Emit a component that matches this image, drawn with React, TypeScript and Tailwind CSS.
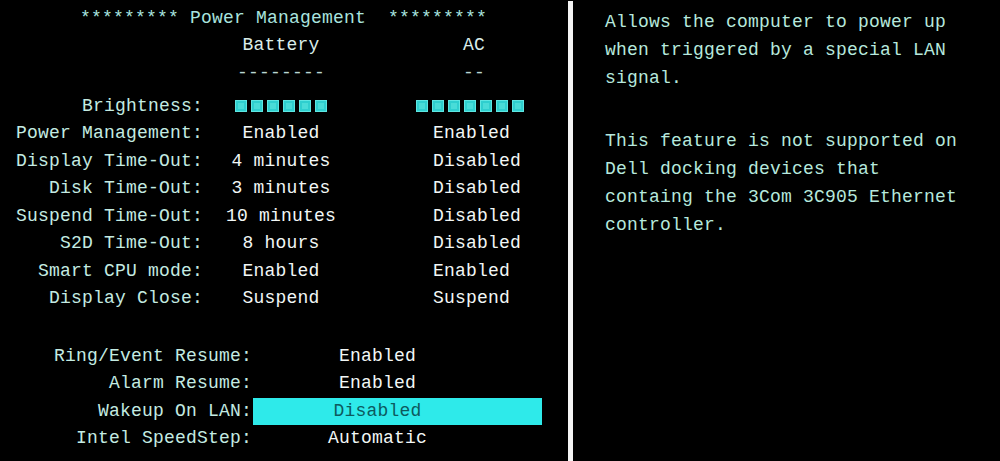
import React from 'react'

const upperRows = [
  { label: 'Power Management:', battery: 'Enabled', ac: 'Enabled' },
  { label: 'Display Time-Out:', battery: '4 minutes', ac: 'Disabled' },
  { label: 'Disk Time-Out:', battery: '3 minutes', ac: 'Disabled' },
  { label: 'Suspend Time-Out:', battery: '10 minutes', ac: 'Disabled' },
  { label: 'S2D Time-Out:', battery: '8 hours', ac: 'Disabled' },
  { label: 'Smart CPU mode:', battery: 'Enabled', ac: 'Enabled' },
  { label: 'Display Close:', battery: 'Suspend', ac: 'Suspend' },
]

const lowerRows = [
  { label: 'Ring/Event Resume:', value: 'Enabled' },
  { label: 'Alarm Resume:', value: 'Enabled' },
  { label: 'Wakeup On LAN:', value: 'Disabled', selected: true },
  { label: 'Intel SpeedStep:', value: 'Automatic' },
]

function Blocks({ count }: { count: number }) {
  return (
    <div className="flex gap-[4px]">
      {Array.from({ length: count }).map((_, i) => (
        <div
          key={i}
          className="w-[12px] h-[12px] bg-[#2fcfcf] border border-[#5ee6e2] flex items-center justify-center"
        >
          <div className="w-[6px] h-[6px] bg-[#49dcd8]" />
        </div>
      ))}
    </div>
  )
}

export default function App() {
  return (
    <div className="flex h-[461px] w-[1000px] overflow-hidden bg-black font-['Liberation_Mono',monospace] text-[18px] tracking-[0.2px]">
      {/* Settings panel */}
      <div className="w-[568px] shrink-0 pt-[4.5px] leading-[27.5px] whitespace-pre">
        <div className="pl-[80px] text-[#a9e3df]">********* Power Management  *********</div>

        <div className="grid grid-cols-[203px_156px_1fr]">
          <div />
          <div className="text-center text-[#dbeeea]">Battery</div>
          <div className="pl-[104px] text-[#dbeeea]">AC</div>

          <div />
          <div className="text-center text-[#b9d6d2]">--------</div>
          <div className="pl-[104px] text-[#b9d6d2]">--</div>
        </div>

        <div className="grid grid-cols-[203px_156px_1fr] mt-[5.5px]">
          <div className="text-right text-[#c4ebe2]">Brightness:</div>
          <div className="flex items-center justify-center">
            <Blocks count={6} />
          </div>
          <div className="flex items-center pl-[57px]">
            <Blocks count={7} />
          </div>

          {upperRows.map((row) => (
            <React.Fragment key={row.label}>
              <div className="text-right text-[#c4ebe2]">{row.label}</div>
              <div className="text-center text-[#f2f7f6]">{row.battery}</div>
              <div className="pl-[74px] text-[#f2f7f6]">{row.ac}</div>
            </React.Fragment>
          ))}
        </div>

        <div className="grid grid-cols-[252px_290px] mt-[30px]">
          {lowerRows.map((row) => (
            <React.Fragment key={row.label}>
              <div className="text-right text-[#c4ebe2]">{row.label}</div>
              <div
                className={
                  row.selected
                    ? 'ml-[1px] bg-[#2eeaea] pr-[40px] text-center text-[#0d5a5e]'
                    : 'ml-[1px] pr-[40px] text-center text-[#f2f7f6]'
                }
              >
                {row.value}
              </div>
            </React.Fragment>
          ))}
        </div>
      </div>

      {/* Divider */}
      <div className="mt-[1px] w-[5px] shrink-0 bg-[#f4f4f4]" />

      {/* Help text */}
      <div className="pl-[32px] pt-[8px] leading-[28px] text-[#b6e8dd] whitespace-pre">
        <div>Allows the computer to power up</div>
        <div>when triggered by a special LAN</div>
        <div>signal.</div>
        <div className="mt-[35px]">This feature is not supported on</div>
        <div>Dell docking devices that</div>
        <div>containg the 3Com 3C905 Ethernet</div>
        <div>controller.</div>
      </div>
    </div>
  )
}
